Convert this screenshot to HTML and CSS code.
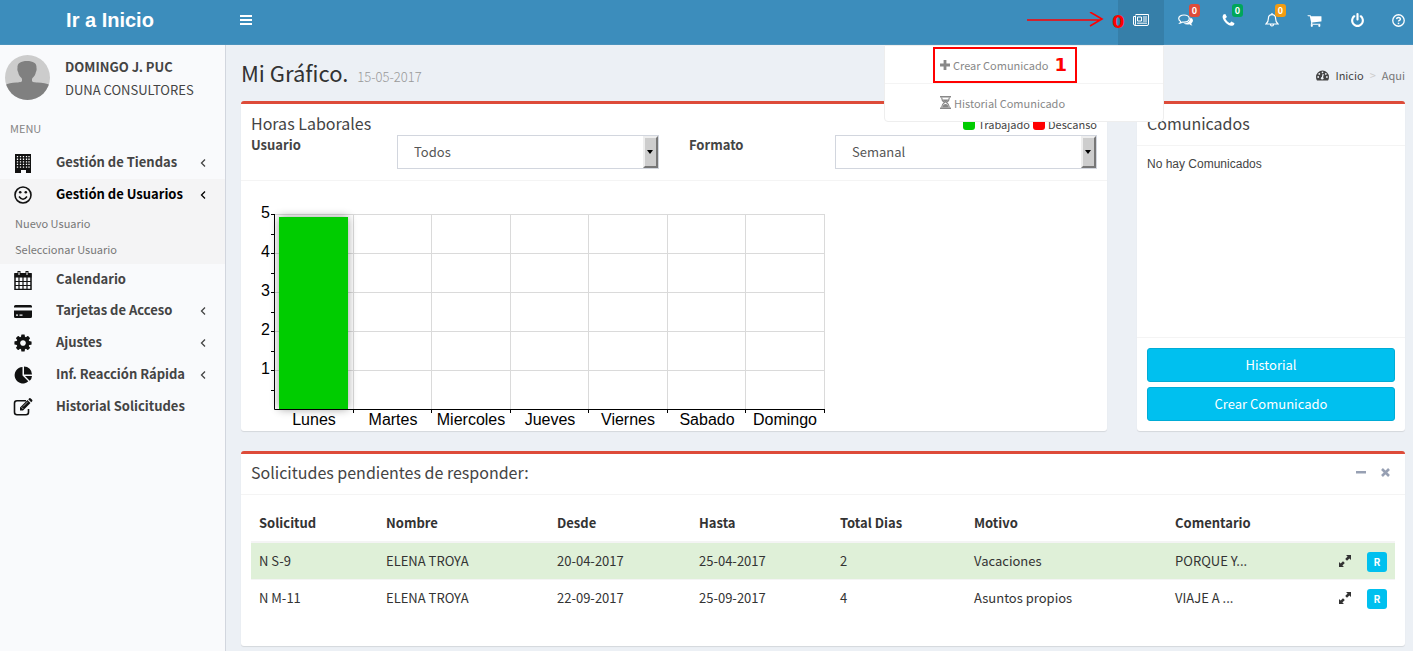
FILE: index.html
```html
<!DOCTYPE html>
<html lang="es">
<head>
<meta charset="utf-8">
<title>Mi Gráfico</title>
<link rel="stylesheet" href="styles.css">
</head>
<body>
<header class="topbar">
  <a class="brand" href="#">Ir a Inicio</a>
  <button class="toggle" aria-label="Menú"><svg width="12" height="12" viewBox="0 0 12 12"><path d="M0 1h12v2H0zM0 5h12v2H0zM0 9h12v2H0z"/></svg></button>
  <nav class="tools">
    <div class="tool active">
      <a href="#" aria-label="Comunicados"><svg width="16" height="12" viewBox="0 0 16 12"><path d="M2.500 1.500V10a1 1 0 0 1-2 0V2.500h2M2.500.5h13V10q0 1.500-1.500 1.500H1.500" fill="none" stroke="currentColor"/><path d="M4.500 3h4v4h-4zM10 3h4M10 5h4M10 7h4M4 9.200h10" fill="none" stroke="currentColor"/></svg></a>
      <svg class="arrow" width="78" height="16" viewBox="0 0 78 16"><path d="M1 8h74M64 0l12 7-12 7" fill="none" stroke="red" stroke-width="1.600"/></svg>
      <b class="step zero">0</b>
      <div class="dropdown">
        <a href="#"><svg width="10" height="10" viewBox="0 0 10 10"><path d="M3.600 0h2.800v3.600H10v2.800H6.400V10H3.600V6.400H0V3.600h3.600z"/></svg><span>Crear Comunicado</span></a>
        <a href="#"><svg width="11" height="13" viewBox="0 0 11 13"><path d="M0 0h11v1.500H0zM0 11.500h11V13H0z"/><path d="M1.600 1.500q0 3 2.900 5-2.900 2-2.900 5M9.400 1.500q0 3-2.900 5 2.900 2 2.900 5" fill="none" stroke="currentColor" stroke-width="1.200"/><path d="M2.500 3.500h6Q7.500 5.500 5.500 6.500 3.500 5.500 2.500 3.500zM2.300 11.500q.5-3.500 3.200-3.500t3.200 3.500z"/></svg><span>Historial Comunicado</span></a>
        <div class="mark"><b class="step">1</b></div>
      </div>
    </div>
    <a class="tool" href="#" aria-label="Mensajes"><svg width="15" height="13" viewBox="0 0 15 13"><path d="M6 1c3 0 5.300 1.600 5.300 3.600S9 8.200 6 8.200q-.8 0-1.500-.1-1.200.9-2.600 1.100.7-.7.8-1.700Q.7 6.400.7 4.600C.7 2.600 3 1 6 1z" fill="none" stroke="currentColor" stroke-width="1.200"/><path d="M12.500 3.600q2.500 1 2.500 3 0 1.700-1.700 2.800.2 1.200 1.200 2.200-1.800-.1-3.100-1.300Q8 11 5.500 9.500 11.800 9.600 12.500 3.600z"/></svg><span class="badge red">0</span></a>
    <a class="tool" href="#" aria-label="Llamadas"><svg width="15" height="15" viewBox="0 0 1792 1792"><path d="M1600 1240q0 27-10 70.500t-21 68.500q-21 50-122 106-94 51-186 51-27 0-53-3.500t-57.500-12.500-47-14.500-55.500-20.500-49-18q-98-35-175-83-127-79-264-216t-216-264q-48-77-83-175-3-9-18-49t-20.500-55.500-14.500-47-12.500-57.500-3.500-53q0-92 51-186 56-101 106-122 25-11 68.500-21t70.500-10q14 0 21 3 18 6 53 76 11 19 30 54t35 63.500 31 53.500q3 4 17.500 25t21.500 35.500 7 28.500q0 20-28.500 50t-62 55-62 53-28.500 46q0 9 5 22.500t8.500 20.500 14 24 11.500 19q76 137 174 235t235 174q2 1 19 11.500t24 14 20.500 8.500 22.500 5q18 0 46-28.500t53-62 55-62 50-28.500q14 0 28.500 7t35.500 21.500 25 17.500q25 15 53.500 31t63.500 35 54 30q70 35 76 53 3 7 3 21z"/></svg><span class="badge green">0</span></a>
    <a class="tool" href="#" aria-label="Avisos"><svg width="14" height="14" viewBox="0 0 14 14"><path d="M7 1.600c2.500 0 3.600 1.800 3.600 3.900 0 2.700.8 4.300 2.400 5.500H1c1.600-1.200 2.400-2.800 2.400-5.500 0-2.100 1.100-3.900 3.600-3.900zM7 0v1.600M5.500 11.500a1.500 1.500 0 0 0 3 0" fill="none" stroke="currentColor" stroke-width="1.200"/></svg><span class="badge orange">0</span></a>
    <a class="tool" href="#" aria-label="Carrito"><svg width="15" height="15" viewBox="0 0 1792 1792"><path d="M704 1536q0 52-38 90t-90 38-90-38-38-90 38-90 90-38 90 38 38 90zm896 0q0 52-38 90t-90 38-90-38-38-90 38-90 90-38 90 38 38 90zm128-1088v512q0 24-16.500 42.500t-40.500 21.500l-1044 122q13 60 13 70 0 16-24 64h920q26 0 45 19t19 45-19 45-45 19h-1024q-26 0-45-19t-19-45q0-11 8-31.500t16-36 21.500-40 15.500-29.500l-177-823h-204q-26 0-45-19t-19-45 19-45 45-19h256q16 0 28.500 6.500t19.500 15.500 13 24.500 8 26 5.500 29.500 4.500 26h1201q26 0 45 19t19 45z"/></svg></a>
    <a class="tool" href="#" aria-label="Salir"><svg width="15" height="15" viewBox="0 0 1792 1792"><path d="M1664 896q0 156-61 298t-164 245-245 164-298 61-298-61-245-164-164-245-61-298q0-182 80.500-343t226.500-270q43-32 95.500-25t83.500 50q32 42 24.500 94.500t-49.500 84.500q-98 74-151.500 181t-53.500 228q0 104 40.500 198.500t109.500 163.500 163.500 109.500 198.500 40.500 198.500-40.500 163.500-109.500 109.500-163.500 40.500-198.500q0-121-53.500-228t-151.500-181q-42-32-49.500-84.500t24.500-94.500q31-43 84-50t95 25q146 109 226.500 270t80.500 343zm-640-768v640q0 52-38 90t-90 38-90-38-38-90v-640q0-52 38-90t90-38 90 38 38 90z"/></svg></a>
    <a class="tool help" href="#" aria-label="Ayuda"><svg width="13" height="13" viewBox="0 0 12 12"><circle cx="6" cy="6" r="5.300" fill="none" stroke="currentColor" stroke-width="1.200"/><path d="M4.200 4.700q.2-1.500 1.800-1.500t1.800 1.300q0 .9-1 1.400-.8.400-.8 1.100" fill="none" stroke="currentColor" stroke-width="1.300"/><path d="M5.300 8h1.400v1.400H5.300z"/></svg></a>
  </nav>
</header>
<div class="shell">
  <aside class="sidebar">
    <div class="user">
      <svg width="45" height="45" viewBox="0 0 45 45"><defs><clipPath id="round"><circle cx="22.500" cy="22.500" r="22.500"/></clipPath></defs><g clip-path="url(#round)"><path fill="#ccc" d="M0 0h45v45H0z"/><path fill="#808080" d="M22 6c6 0 10 2 9.500 7 .3 1 .2 2.500-.6 4-.6 3-1.500 4.500-3.400 6-.5.500-.5 1.500-.5 2.500 0 1.500 1.500 1.800 5.500 2 5 .4 9.500.9 12.500 2.500v15H0V30c3-1.600 6.500-2.100 11.500-2.500 4-.2 5.500-.5 5.500-2 0-1 0-2-.5-2.500-1.900-1.500-2.800-3-3.400-6-.8-1.500-.9-3-.6-4-.5-5 3.500-7 9.500-7z"/></g></svg>
      <div><b>DOMINGO J. PUC</b><span>DUNA CONSULTORES</span></div>
    </div>
    <div class="menu-title">MENU</div>
    <ul class="menu">
      <li><a class="parent" href="#"><svg width="20" height="20" viewBox="0 0 20 20"><path d="M2 1h16v19h-5v-3H8v3H2z"/><path d="M4.500 3v12M7.500 3v12M10.500 3v12M13.500 3v12M16 3v12" stroke="#fff" stroke-width="1.300" stroke-dasharray="1.300 1.300" fill="none"/></svg><span>Gestión de Tiendas</span><svg class="chev" width="6" height="8" viewBox="0 0 6 8"><path d="M5 .5L1.500 4 5 7.500"/></svg></a></li>
      <li class="current"><a class="parent" href="#"><svg width="20" height="20" viewBox="0 0 20 20"><circle cx="10" cy="10" r="8" fill="none" stroke="currentColor" stroke-width="1.600"/><circle cx="7.200" cy="7.300" r="1.300"/><circle cx="12.800" cy="7.300" r="1.300"/><path d="M6 11.500q4 5.500 8 0" fill="none" stroke="currentColor" stroke-width="1.500"/></svg><span>Gestión de Usuarios</span><svg class="chev" width="6" height="8" viewBox="0 0 6 8"><path d="M5 .5L1.500 4 5 7.500"/></svg></a>
        <ul class="submenu"><li><a href="#">Nuevo Usuario</a></li><li><a href="#">Seleccionar Usuario</a></li></ul></li>
      <li><a href="#"><svg width="20" height="20" viewBox="0 0 20 20"><path d="M2 4h16v15.500H2z" fill="none" stroke="currentColor" stroke-width="1.500"/><path d="M1.500 3h17v4.500h-17zM4.500 1h3v4h-3zM12.500 1h3v4h-3z"/><path d="M6 7v12M10 7v12M14 7v12M2 11.500h16M2 15.500h16" fill="none" stroke="currentColor" stroke-width="1.200"/><path d="M6 2v3M14 2v3" stroke="#fff"/></svg><span>Calendario</span></a></li>
      <li><a class="parent" href="#"><svg width="20" height="20" viewBox="0 0 20 20"><path fill-rule="evenodd" d="M2.500 4h15Q19 4 19 5.500V6.500H1v-1Q1 4 2.500 4zM1 9.500h18v6q0 1.500-1.500 1.500h-15Q1 17 1 15.500zM3 13.500h2v1.300H3zm3.500 0h3v1.300h-3z"/></svg><span>Tarjetas de Acceso</span><svg class="chev" width="6" height="8" viewBox="0 0 6 8"><path d="M5 .5L1.500 4 5 7.500"/></svg></a></li>
      <li><a class="parent" href="#"><svg width="20" height="20" viewBox="0 0 1792 1792"><path d="M1152 896q0-106-75-181t-181-75-181 75-75 181 75 181 181 75 181-75 75-181zm512-109v222q0 12-8 23t-20 13l-185 28q-19 54-39 91 35 50 107 138 10 12 10 25t-9 23q-27 37-99 108t-94 71q-12 0-26-9l-138-108q-44 23-91 38-16 136-29 186-7 28-36 28h-222q-14 0-24.500-8.500t-11.500-21.500l-28-184q-49-16-90-37l-141 107q-10 9-25 9-14 0-25-11-126-114-165-168-7-10-7-23 0-12 8-23 15-21 51-66.500t54-70.500q-27-50-41-99l-183-27q-13-2-21-12.500t-8-23.500v-222q0-12 8-23t19-13l186-28q14-46 39-92-40-57-107-138-10-12-10-24 0-10 9-23 26-36 98.500-107.500t94.500-71.500q13 0 26 10l138 107q44-23 91-38 16-136 29-186 7-28 36-28h222q14 0 24.500 8.500t11.500 21.500l28 184q49 16 90 37l142-107q9-9 24-9 13 0 25 10 129 119 165 170 7 8 7 22 0 12-8 23-15 21-51 66.500t-54 70.500q26 50 41 98l183 28q13 2 21 12.500t8 23.500z"/></svg><span>Ajustes</span><svg class="chev" width="6" height="8" viewBox="0 0 6 8"><path d="M5 .5L1.500 4 5 7.500"/></svg></a></li>
      <li><a class="parent" href="#"><svg width="20" height="20" viewBox="0 0 20 20"><path d="M9.500 2v8.500l5.800 5.800A8.200 8.200 0 1 1 9.500 2zM11 1.500a8 8 0 0 1 8 8h-8zM12 11h7q-.2 3-2.300 4.800z"/></svg><span>Inf. Reacción Rápida</span><svg class="chev" width="6" height="8" viewBox="0 0 6 8"><path d="M5 .5L1.500 4 5 7.500"/></svg></a></li>
      <li><a href="#"><svg width="20" height="20" viewBox="0 0 20 20"><path d="M13 3.700H4q-2.500 0-2.500 2.500v9Q1.500 17.700 4 17.700h9q2.500 0 2.500-2.500V12" fill="none" stroke="currentColor" stroke-width="1.600"/><path d="M7 10.500l7.500-7.500 3 3L10 13.500H7zM15.300 2.200l1-1q.8-.5 1.500.2l1.300 1.300q.7.700.1 1.500l-1 1z"/><path d="M8.500 10.200l1.800 1.800M10 9.500l4.800-4.800" stroke="#ddd" stroke-width=".7"/></svg><span>Historial Solicitudes</span></a></li>
    </ul>
  </aside>
  <main class="content">
    <div class="page-head">
      <h1>Mi Gráfico. <small>15-05-2017</small></h1>
      <nav class="crumbs"><svg width="13" height="11" viewBox="0 0 13 11"><path d="M6.500.5A6.500 6.500 0 0 1 13 7q0 2-1 3.500H1Q0 9 0 7A6.500 6.500 0 0 1 6.500.5z"/><path d="M6.200 8.200L7.200 4" stroke="#ecf0f5" stroke-width="1.200"/><g fill="#ecf0f5"><circle cx="6.200" cy="8.300" r="1.300"/><circle cx="2.200" cy="7" r=".9"/><circle cx="3.300" cy="3.900" r=".9"/><circle cx="6.500" cy="2.400" r=".8"/><circle cx="9.800" cy="3.900" r=".9"/><circle cx="10.900" cy="7" r=".9"/></g></svg><a href="#">Inicio</a><i>&gt;</i><span>Aqui</span></nav>
    </div>
    <div class="row">
      <section class="box">
        <div class="box-head">
          <div class="title-line"><h2>Horas Laborales</h2><div class="legend"><i class="work"></i><span>Trabajado</span><i class="rest"></i><span>Descanso</span></div></div>
          <div class="filters">
            <label for="usr">Usuario</label><div class="field"><div class="pick"><select id="usr"><option>Todos</option></select></div></div>
            <label for="fmt">Formato</label><div class="field"><div class="pick"><select id="fmt"><option>Semanal</option></select></div></div>
          </div>
        </div>
        <div class="box-body chart">
          <svg width="590" height="240" viewBox="0 0 590 240">
            <defs><filter id="glow" x="-30%" y="-30%" width="160%" height="160%"><feGaussianBlur stdDeviation="5"/></filter></defs>
            <path d="M24 23.500h550M24 62.500h550M24 101.500h550M24 140.500h550M24 179.500h550M102.500 23v195M180.500 23v195M259.500 23v195M337.500 23v195M416.500 23v195M494.500 23v195M573.500 23v195" stroke="#dadada" fill="none"/>
            <path d="M28 26h69v192H28z" fill="#000" opacity=".4" filter="url(#glow)"/>
            <path d="M28 26h69v192H28z" fill="#00cc00"/>
            <path d="M23.500 23v195.500H574M20 23.500h4M20 62.500h4M20 101.500h4M20 140.500h4M20 179.500h4M20 43.500h4M20 82.500h4M20 121.500h4M20 160.500h4M20 199.500h4M102.500 218v4M180.500 218v4M259.500 218v4M337.500 218v4M416.500 218v4M494.500 218v4M573.500 218v4" stroke="#000" fill="none"/>
            <g class="ticks" text-anchor="end"><text x="19" y="27">5</text><text x="19" y="66">4</text><text x="19" y="105">3</text><text x="19" y="144">2</text><text x="19" y="183">1</text></g>
            <g class="ticks" text-anchor="middle"><text x="63" y="234">Lunes</text><text x="142" y="234">Martes</text><text x="220" y="234">Miercoles</text><text x="299" y="234">Jueves</text><text x="377" y="234">Viernes</text><text x="456" y="234">Sabado</text><text x="534" y="234">Domingo</text></g>
          </svg>
        </div>
      </section>
      <section class="box notices">
        <div class="box-head"><h2>Comunicados</h2></div>
        <div class="box-body"><p>No hay Comunicados</p></div>
        <div class="box-foot"><button>Historial</button><button>Crear Comunicado</button></div>
      </section>
    </div>
    <section class="box requests">
      <div class="box-head request-head"><h2>Solicitudes pendientes de responder:</h2>
        <div class="box-tools"><button aria-label="Minimizar"><svg width="10" height="9" viewBox="0 0 10 9"><path d="M0 3h10v2.500H0z"/></svg></button><button aria-label="Cerrar"><svg width="9" height="9" viewBox="0 0 9 9"><path d="M1 1l7 7M8 1L1 8" stroke="currentColor" stroke-width="2.600"/></svg></button></div>
      </div>
      <div class="box-body">
        <table>
          <colgroup><col class="c1"><col class="c2"><col class="c3"><col class="c4"><col class="c5"><col class="c6"><col><col class="c8"><col class="c9"></colgroup>
          <thead><tr><th>Solicitud</th><th>Nombre</th><th>Desde</th><th>Hasta</th><th>Total Dias</th><th>Motivo</th><th>Comentario</th><th></th><th></th></tr></thead>
          <tbody>
            <tr class="ok"><td>N S-9</td><td>ELENA TROYA</td><td>20-04-2017</td><td>25-04-2017</td><td>2</td><td>Vacaciones</td><td>PORQUE Y...</td><td><a href="#" aria-label="Ampliar"><svg width="12" height="12" viewBox="0 0 12 12"><path d="M7 0h5v5l-1.600-1.600L8 5.800 6.200 4l2.400-2.400zM5 12H0V7l1.600 1.600L4 6.200 5.800 8l-2.400 2.400z"/></svg></a></td><td><button class="r">R</button></td></tr>
            <tr><td>N M-11</td><td>ELENA TROYA</td><td>22-09-2017</td><td>25-09-2017</td><td>4</td><td>Asuntos propios</td><td>VIAJE A ...</td><td><a href="#" aria-label="Ampliar"><svg width="12" height="12" viewBox="0 0 12 12"><path d="M7 0h5v5l-1.600-1.600L8 5.800 6.200 4l2.400-2.400zM5 12H0V7l1.600 1.600L4 6.200 5.800 8l-2.400 2.400z"/></svg></a></td><td><button class="r">R</button></td></tr>
          </tbody>
        </table>
      </div>
    </section>
  </main>
</div>
</body>
</html>
```
FILE: styles.css
```css
*, *::before, *::after { box-sizing: border-box; }
body { margin: 0; background: #ecf0f5; color: #333; font: 13px/20px "Noto Sans CJK SC", sans-serif; }
a { color: inherit; text-decoration: none; }
ul { list-style: none; margin: 0; padding: 0; }
h1, h2, p { margin: 0; font-weight: 400; }
button, select { font: inherit; color: inherit; border: 0; background: none; padding: 0; }
svg { fill: currentColor; flex: none; display: block; }

.topbar { display: flex; height: 45px; background: #3c8dbc; color: #fff; border-bottom: 1px solid #4b93bd; }
.brand { width: 220px; text-align: center; font: bold 20px/40px "Liberation Sans", sans-serif; }
.toggle { padding: 0 20px 5px; }
.tools { display: flex; margin-left: auto; }
.tool { position: relative; display: flex; align-items: center; justify-content: center; width: 43px; height: 45px; padding-bottom: 5px; }
.tool.active { width: 46px; background: #367fa9; }
.tool.help { width: 34px; justify-content: flex-start; padding-left: 13px; }
.badge { position: absolute; top: 4px; right: 7px; padding: 0 3px; border-radius: 3px; font: bold 9px/13px "Noto Sans CJK SC", sans-serif; }
.red { background: #dd4b39; }
.green { background: #00a65a; }
.orange { background: #f39c12; }
.arrow { position: absolute; top: 12px; right: 60px; }
.step { color: red; font: bold 18px/20px "DejaVu Sans", sans-serif; }
.zero { position: absolute; top: 12px; left: -6px; }
.dropdown { position: absolute; z-index: 2; top: 45px; right: 0; width: 280px; background: #fff; border: 1px solid #eee; border-radius: 0 0 4px 4px; color: #888; font-size: 11px; }
.dropdown a { display: flex; align-items: center; gap: 3px; height: 38px; padding-left: 55px; }
.dropdown a:first-child { height: 37px; }
.dropdown a + a { border-top: 1px solid #f4f4f4; }
.mark { position: absolute; top: 1px; left: 48px; width: 144px; height: 36px; padding: 6px 8px; border: 2px solid red; text-align: right; pointer-events: none; }

.shell { display: flex; min-height: calc(100vh - 45px); }
.sidebar { flex: none; width: 226px; background: #f9fafc; border-right: 1px solid #d2d6de; color: #444; }
.user { display: flex; gap: 15px; padding: 10px 5px 0; }
.user b, .user span { display: block; line-height: 23px; }
.menu-title { padding: 17px 10px 9px; color: #848484; font-size: 11px; }
.menu a { display: flex; align-items: center; height: 31px; padding: 0 19px 0 13px; font-weight: bold; }
.menu a.parent { height: 32px; }
.menu a > svg:first-child { width: 20px; color: #111; }
.menu span { margin-left: 23px; padding-bottom: 2px; }
.chev { margin-left: auto; }
.chev path { fill: none; stroke: currentColor; stroke-width: 1.3; }
.current { background: #f4f4f5; }
.current > a { color: #000; }
.submenu { padding-bottom: 1px; }
.menu .submenu a { height: 26px; padding: 0 15px 2px; color: #777; font-size: 11px; font-weight: 400; }

.content { flex: 1; min-width: 0; padding: 0 8px 6px 15px; }
.page-head { display: flex; justify-content: space-between; align-items: center; height: 56px; padding-top: 2px; }
h1 { font-size: 22px; line-height: 26px; }
h1 small { margin-left: 4px; color: #999; font-size: 13px; font-weight: 300; }
.crumbs { display: flex; align-items: center; gap: 6px; padding-top: 2px; color: #444; font-size: 11px; }
.crumbs i { color: #ccc; font-style: normal; }
.crumbs span { color: #777; }
.row { display: grid; grid-template-columns: 866fr 268fr; gap: 30px; margin-bottom: 20px; }
.box { background: #fff; border-top: 3px solid #dd4b39; border-radius: 3px; box-shadow: 0 1px 1px rgba(0, 0, 0, .1); color: #444; }
.box-head { padding: 9px 10px 11px; border-bottom: 1px solid #f4f4f4; }
h2 { font-size: 16px; line-height: 21px; }
.title-line { display: flex; justify-content: space-between; height: 22px; }
.legend { display: flex; align-items: center; gap: 3px; font-size: 11px; }
.legend i { width: 12px; height: 11px; border-radius: 3px; }
.work { background: #0c0; }
.rest { background: red; }
.filters { display: grid; grid-template-columns: 1fr 2fr 1fr 2fr; margin-right: -30px; }
.filters label { font-weight: bold; }
.field { padding-right: 30px; }
.pick { position: relative; border: 1px solid #d2d6de; }
.pick select { display: block; width: 100%; height: 32px; padding: 0 16px; appearance: none; background: #fff; color: #555; }
.pick::before { content: ""; position: absolute; top: 0; right: 0; bottom: 0; width: 15px; background: #cdcdcd; border: 2px solid; border-color: #eee #777 #777 #eee; }
.pick::after { content: ""; position: absolute; top: 14px; right: 5px; border: 3px solid transparent; border-top: 4px solid #000; border-bottom: 0; }
.chart { padding: 10px 10px 0; }
.chart svg { overflow: visible; }
.ticks { fill: #000; font: 16px "Liberation Sans", sans-serif; }
.notices { display: flex; flex-direction: column; }
.notices .box-body { flex: 1; padding: 8px 10px; font: 12px/20px "Liberation Sans", sans-serif; }
.box-foot { display: grid; gap: 5px; padding: 10px; border-top: 1px solid #f4f4f4; }
.box-foot button { height: 34px; border: 1px solid #00acd6; border-radius: 3px; background: #00c0ef; color: #fff; }
.request-head { display: flex; justify-content: space-between; padding-top: 8px; }
.box-tools { display: flex; align-items: center; gap: 15px; padding-right: 5px; color: #97a0b3; }
.requests .box-body { padding: 10px 10px 30px; }
table { width: 100%; table-layout: fixed; border-collapse: collapse; color: #333; }
th, td { height: 37px; padding: 0 8px; text-align: left; }
thead th { border-bottom: 2px solid #f4f4f4; }
td { border-top: 1px solid #f4f4f4; }
.ok { background: #dff0d8; }
.c1 { width: 127px; }
.c2 { width: 171px; }
.c3 { width: 142px; }
.c4 { width: 141px; }
.c5 { width: 134px; }
.c6 { width: 201px; }
.c8 { width: 28px; }
.c9 { width: 36px; }
.r { display: block; width: 20px; height: 20px; margin-top: 2px; border-radius: 3px; background: #00c0ef; color: #fff; font-size: 10px; font-weight: bold; line-height: 20px; }
```
